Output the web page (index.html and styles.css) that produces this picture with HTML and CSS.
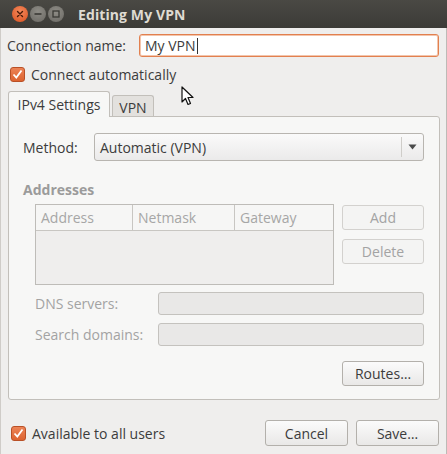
FILE: index.html
```html
<!DOCTYPE html>
<html>
<head>
<meta charset="utf-8">
<link rel="stylesheet" href="styles.css">
</head>
<body>
<div class="window">
  <div class="titlebar">
    <div class="wbtns">
      <span class="wb close"><svg width="16" height="16" viewBox="0 0 16 16"><path d="M5.5 5.5 L10.5 10.5 M10.5 5.5 L5.5 10.5" stroke="#4a1a08" stroke-width="1.4" stroke-linecap="round"/></svg></span>
      <span class="wb"><svg width="16" height="16" viewBox="0 0 16 16"><path d="M4.5 8 H11.5" stroke="#3a3935" stroke-width="1.6"/></svg></span>
      <span class="wb"><svg width="16" height="16" viewBox="0 0 16 16"><rect x="5" y="5" width="6" height="6" fill="none" stroke="#3a3935" stroke-width="1.3"/></svg></span>
    </div>
    <div class="title">Editing My VPN</div>
  </div>
  <div class="body">
    <div class="row namerow">
      <span class="lbl">Connection name:</span>
      <div class="entry focus">My VPN<span class="caret"></span></div>
    </div>
    <div class="row checkrow">
      <span class="check"><svg width="15" height="15" viewBox="0 0 15 15"><path d="M3.5 7.5 L6.3 10.5 L11.5 3.5" fill="none" stroke="#fff" stroke-width="1.8"/></svg></span>
      <span class="lbl">Connect automatically</span>
    </div>
    <div class="notebook">
      <div class="tabs">
        <div class="tab active">IPv4 Settings</div>
        <div class="tab">VPN</div>
      </div>
      <div class="panel">
        <div class="row methodrow">
          <span class="lbl">Method:</span>
          <div class="combo">
            <span class="ctext">Automatic (VPN)</span>
            <span class="carrow"><svg width="9" height="6" viewBox="0 0 9 6"><path d="M0.5 0.5 H8.5 L4.5 5.5 Z" fill="#4a4a4a"/></svg></span>
          </div>
        </div>
        <div class="section">Addresses</div>
        <div class="addr">
          <div class="table">
            <div class="thead">
              <span class="th c1">Address</span>
              <span class="th c2">Netmask</span>
              <span class="th c3">Gateway</span>
            </div>
            <div class="tbody"></div>
          </div>
          <div class="side">
            <div class="btn dis">Add</div>
            <div class="btn dis">Delete</div>
          </div>
        </div>
        <div class="row frow first">
          <span class="lbl dim">DNS servers:</span>
          <div class="entry dis"></div>
        </div>
        <div class="row frow">
          <span class="lbl dim">Search domains:</span>
          <div class="entry dis"></div>
        </div>
        <div class="routes">
          <div class="btn">Routes…</div>
        </div>
      </div>
    </div>
    <div class="row bottom">
      <span class="check"><svg width="15" height="15" viewBox="0 0 15 15"><path d="M3.5 7.5 L6.3 10.5 L11.5 3.5" fill="none" stroke="#fff" stroke-width="1.8"/></svg></span>
      <span class="lbl">Available to all users</span>
      <div class="spacer"></div>
      <div class="btn big">Cancel</div>
      <div class="btn big">Save…</div>
    </div>
  </div>
  <svg class="cursor" width="14" height="22" viewBox="0 0 14 22"><path d="M1 1 L1 16 L4.5 12.5 L7 18.5 L9.5 17.5 L7 11.5 L12 11.5 Z" fill="#fff" stroke="#111" stroke-width="1.2" stroke-linejoin="round"/></svg>
</div>
</body>
</html>
```
FILE: styles.css
```css
* { box-sizing: border-box; }
html, body { margin: 0; padding: 0; }
body {
  width: 447px; height: 454px; overflow: hidden;
  font-family: "Open Sans", "DejaVu Sans", sans-serif;
  font-size: 14px; color: #3c3c3c;
  background: #efeeed;
}
.window { position: relative; width: 447px; height: 454px; background: #efeeed; border-left: 1px solid #cfccc8; border-right: 1px solid #bdbab6; }
.titlebar {
  height: 28px; display: flex; align-items: center;
  background: linear-gradient(#4a4944, #3c3b37);
  margin: 0 -1px;
}
.wbtns { display: flex; gap: 2px; margin-left: 12px; }
.wb {
  width: 16px; height: 16px; border-radius: 50%;
  background: radial-gradient(circle at 50% 35%, #8e8c86, #6a6863);
  display: flex;
}
.wb.close { background: radial-gradient(circle at 50% 35%, #f58a5c, #d9501f); }
.title { margin-left: 14px; color: #dfdbd2; font-weight: bold; font-size: 14px; letter-spacing: 0.1px; }
.body { padding: 6px 7px 0 6px; }
.row { display: flex; align-items: center; }
.namerow { height: 23px; }
.namerow .lbl { width: 132px; }
.entry {
  flex: 1; height: 23px; border: 1px solid #b7b4af; border-radius: 3px;
  background: #fff; padding-left: 5px; display: flex; align-items: center;
}
.entry.focus { border-color: #e2804f; box-shadow: inset 0 0 0 1px #f3c5ac; }
.caret { width: 1px; height: 16px; background: #333; margin-left: 1px; }
.checkrow { margin-top: 10px; height: 15px; padding-left: 3px; }
.check {
  width: 15px; height: 15px; border-radius: 3px;
  background: linear-gradient(#ec8356, #dd6330);
  border: 1px solid #b95026; display: flex; align-items: center; justify-content: center;
  margin-right: 6px; flex: none;
}
.check svg { margin: -1px; }
.notebook { margin-top: 9px; }
.tabs { display: flex; align-items: flex-end; height: 25px; padding-left: 1px; position: relative; z-index: 1; }
.tab {
  height: 21px; padding: 0 7px; border: 1px solid #c2bfba; border-bottom: none;
  border-radius: 3px 3px 0 0; background: #e3e1de; display: flex; align-items: center; margin-left: 2px;
  color: #3c3c3c;
}
.tab.active { height: 26px; width: 102px; margin-left: 0; background: #f7f7f6; margin-bottom: -1px; justify-content: center; }
.tab:not(.active) { padding-top: 2px; width: 42px; justify-content: center; }
.panel {
  margin-left: 1px; width: 432px; height: 284px; border: 1px solid #c2bfba; border-radius: 0 3px 3px 3px;
  background: #f7f7f6; padding: 16px 15px 0 14px;
}
.methodrow { height: 28px; }
.methodrow .lbl { width: 71px; }
.combo {
  flex: 1; height: 28px; border: 1px solid #b8b5b0; border-radius: 3px;
  background: linear-gradient(#fafafa, #ebeaea); display: flex; align-items: center;
}
.ctext { flex: 1; padding-left: 5px; }
.carrow { width: 22px; height: 20px; border-left: 1px solid #cfcdc9; display: flex; align-items: center; justify-content: center; }
.section { margin-top: 19px; font-weight: bold; color: #9b9b9b; height: 20px; line-height: 20px; }
.addr { display: flex; margin-top: 4px; padding-left: 12px; }
.table { width: 300px; height: 81px; border: 1px solid #bebcb8; background: #efeeed; }
.thead { display: flex; height: 26px; border-bottom: 1px solid #c8c6c2; background: #f6f6f5; }
.th { color: #a6a6a6; padding-left: 5px; display: flex; align-items: center; border-right: 1px solid #c8c6c2; }
.c1 { width: 97px; }
.c2 { width: 102px; }
.c3 { flex: 1; border-right: none; }
.side { margin-left: 8px; display: flex; flex-direction: column; gap: 9px; padding-top: 1px; }
.btn {
  width: 82px; height: 25px; border: 1px solid #b3b0ab; border-radius: 3px;
  background: linear-gradient(#fbfbfb, #e9e8e7); display: flex; align-items: center; justify-content: center;
  color: #3c3c3c;
}
.btn.dis { background: #f4f4f3; border-color: #d3d1ce; color: #a3a3a3; height: 25px; }
.frow { padding-left: 12px; height: 23px; }
.frow.first { margin-top: 7px; }
.frow + .frow { margin-top: 8px; }
.frow .lbl { width: 123px; }
.dim { color: #a3a3a3; }
.entry.dis { background: #e9e8e7; border-color: #c4c2be; }
.routes { display: flex; justify-content: flex-end; margin-top: 15px; }
.bottom { margin-top: 20px; height: 26px; padding-left: 4px; }
.spacer { flex: 1; }
.btn.big { width: 83px; height: 26px; margin-left: 8px; }
.cursor { position: absolute; left: 180px; top: 86px; }
```
